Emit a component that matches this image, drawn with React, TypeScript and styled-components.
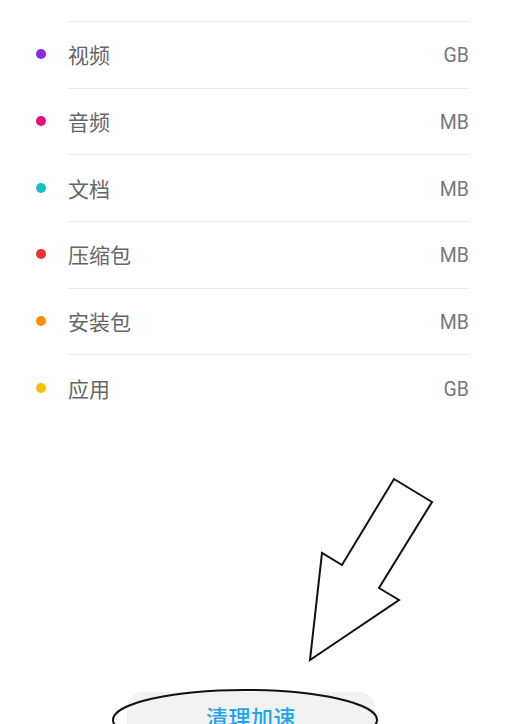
import React from 'react'
import styled, { createGlobalStyle } from 'styled-components'

const GlobalStyle = createGlobalStyle`
  html, body {
    margin: 0;
    padding: 0;
    background: #ffffff;
  }
  body {
    font-family: Roboto, "Noto Sans CJK SC", sans-serif;
  }
`

interface Category {
  name: string
  unit: string
  color: string
}

const categories: Category[] = [
  { name: '视频', unit: 'GB', color: '#8a2be2' },
  { name: '音频', unit: 'MB', color: '#e2127a' },
  { name: '文档', unit: 'MB', color: '#14bfc8' },
  { name: '压缩包', unit: 'MB', color: '#f2302f' },
  { name: '安装包', unit: 'MB', color: '#fb8c0c' },
  { name: '应用', unit: 'GB', color: '#fbbd08' },
]

const Page = styled.div`
  position: relative;
  width: 506px;
  height: 724px;
  overflow: hidden;
  display: flex;
  flex-direction: column;
`

const List = styled.ul`
  list-style: none;
  margin: 21px 0 0 0;
  padding: 0;
`

const Row = styled.li`
  display: flex;
  height: 66.67px;
`

const DotCell = styled.div`
  width: 68px;
  flex-shrink: 0;
  display: flex;
  align-items: center;
  justify-content: center;
  padding-left: 14px;
  box-sizing: border-box;
`

const Dot = styled.span<{ $color: string }>`
  width: 10px;
  height: 10px;
  border-radius: 50%;
  background: ${(p) => p.$color};
`

const Content = styled.div`
  flex: 1;
  display: flex;
  align-items: center;
  justify-content: space-between;
  border-top: 1px solid #ebebeb;
  margin-right: 37px;
`

const Name = styled.span`
  font-family: "Noto Sans CJK SC", sans-serif;
  font-size: 21px;
  color: #666666;
  margin-top: -1px;
`

const Unit = styled.span`
  font-family: Roboto, sans-serif;
  font-size: 19.5px;
  color: #777777;
  margin-top: 2px;
`

const Footer = styled.div`
  margin-top: auto;
  padding-left: 127px;
`

const CleanButton = styled.div`
  width: 248px;
  height: 58px;
  margin-bottom: -26px;
  border-radius: 16px;
  background: #f2f2f2;
  display: flex;
  justify-content: center;
  padding-top: 9px;
  box-sizing: border-box;
  font-family: "Noto Sans CJK SC", sans-serif;
  font-size: 22px;
  font-weight: 500;
  line-height: 30px;
  color: #1ea5ec;
  letter-spacing: 0.5px;
`

const Annotation = styled.svg`
  position: absolute;
  left: 0;
  top: 0;
  pointer-events: none;
`

export default function App() {
  return (
    <>
      <GlobalStyle />
      <Page>
        <List>
          {categories.map((c) => (
            <Row key={c.name}>
              <DotCell>
                <Dot $color={c.color} />
              </DotCell>
              <Content>
                <Name>{c.name}</Name>
                <Unit>{c.unit}</Unit>
              </Content>
            </Row>
          ))}
        </List>
        <Footer>
          <CleanButton>清理加速</CleanButton>
        </Footer>
        <Annotation width="506" height="724" viewBox="0 0 506 724">
          <polygon
            points="394,479 432,502 379,588 399,600 310,660 322,553 342,565"
            fill="#ffffff"
            stroke="#111111"
            strokeWidth="2"
            strokeLinejoin="miter"
          />
          <ellipse
            cx="245"
            cy="720"
            rx="132"
            ry="30"
            fill="none"
            stroke="#111111"
            strokeWidth="2"
          />
        </Annotation>
      </Page>
    </>
  )
}
